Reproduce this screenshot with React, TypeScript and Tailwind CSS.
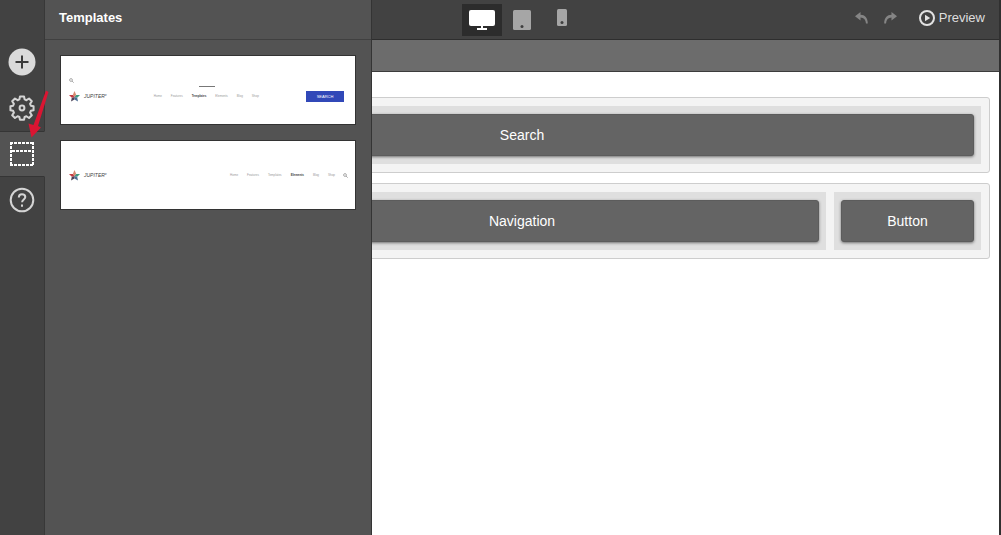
import type { ReactNode } from "react";

function PlusIcon() {
  return (
    <svg width="28" height="28" viewBox="0 0 28 28" fill="none" aria-hidden="true">
      <circle cx="14" cy="14" r="13.5" fill="#dadada" />
      <path d="M14 7.500v13M7.500 14h13" stroke="#3a3a3a" strokeWidth="2" />
    </svg>
  );
}

function GearIcon() {
  return (
    <svg width="26" height="26" viewBox="0 0 26 27" fill="none" stroke="#d4d4d4" strokeWidth="2.100" strokeLinejoin="round" aria-hidden="true">
      <path d="M10.900 1.500h4.200l.6 3.100 1.900.8 2.700-1.800 2.900 2.900-1.800 2.700.8 1.900 2.800.6v4.100l-2.800.6-.8 1.900 1.800 2.700-2.900 2.900-2.700-1.800-1.900.8-.6 2.800h-4.200l-.6-2.800-1.900-.8-2.700 1.800-2.900-2.900 1.800-2.700-.8-1.900-2.800-.6v-4.100l2.800-.6.8-1.900-1.800-2.700 2.900-2.900 2.700 1.800 1.900-.8z" />
      <circle cx="13" cy="13.500" r="2.500" />
    </svg>
  );
}

function LayoutIcon() {
  return (
    <svg width="26" height="26" viewBox="0 0 26 26" fill="none" stroke="#fff" strokeWidth="2" aria-hidden="true">
      <path d="M1 2h24M1 24h24M2 1v24M24 1v24" strokeDasharray="3 1" />
      <path d="M3 10h20" strokeDasharray="3 1" />
    </svg>
  );
}

function HelpIcon() {
  return (
    <svg width="26" height="26" viewBox="0 0 26 26" fill="none" stroke="#d4d4d4" strokeWidth="2" aria-hidden="true">
      <circle cx="13" cy="13" r="11.300" />
      <path d="M9.800 10.500c0-2 1.300-3.300 3.200-3.300s3.300 1.200 3.300 2.900c0 2.300-3.200 2.600-3.200 5.200" />
      <path d="M13 17.500v2.200" />
    </svg>
  );
}

function DesktopIcon() {
  return (
    <svg width="26" height="22" viewBox="0 0 26 22" fill="#fff" aria-hidden="true">
      <rect x="0" y="1" width="26" height="16" rx="2" />
      <path d="M12 17h2v2h4v2H8v-2h4z" />
    </svg>
  );
}

function TabletIcon() {
  return (
    <svg width="18" height="20" viewBox="0 0 18 20" aria-hidden="true">
      <rect width="18" height="20" rx="1.500" fill="#a6a6a6" />
      <circle cx="9" cy="16.500" r="1.500" fill="#3f3f3f" />
    </svg>
  );
}

function PhoneIcon() {
  return (
    <svg width="10" height="18" viewBox="0 0 10 18" aria-hidden="true">
      <rect width="10" height="17" rx="1.500" fill="#a6a6a6" />
      <circle cx="5" cy="13.500" r="1.500" fill="#3f3f3f" />
    </svg>
  );
}

function UndoIcon({ flip = false }: { flip?: boolean }) {
  return (
    <svg width="14" height="12" viewBox="0 0 14 12" className={flip ? "-scale-x-100" : ""} aria-hidden="true">
      <path d="M0 4.200 5.500 0v2.800c4.300 0 7.300 3 7.300 8.700h-1.800c-.3-4-2.200-6-5.500-6v2.900z" fill="#858585" />
    </svg>
  );
}

function PlayIcon() {
  return (
    <svg width="16" height="16" viewBox="0 0 16 16" fill="none" aria-hidden="true">
      <circle cx="8" cy="8" r="7" stroke="#e2e2e2" strokeWidth="2" />
      <path d="M6 4.800v6.400L11.200 8z" fill="#e2e2e2" />
    </svg>
  );
}

function TinySearch() {
  return (
    <svg width="5" height="5" viewBox="0 0 5 5" fill="none" stroke="#888" strokeWidth=".7" aria-hidden="true">
      <circle cx="2" cy="2" r="1.400" />
      <path d="M3 3l1.700 1.700" />
    </svg>
  );
}

function Brand() {
  return (
    <span className="flex items-center gap-1">
      <svg width="11" height="11" viewBox="0 0 11 11" aria-hidden="true">
        <path d="M5.500 0 7.200 4 5.500 6 3.800 4z" fill="#d98a72" />
        <path d="M11 4.100 8.200 6.700 5.500 6 7.200 4z" fill="#3f9a80" />
        <path d="M9 10.600 5.500 8.600V6l2.700.7z" fill="#4a6c93" />
        <path d="M2 10.600 2.800 6.700 5.500 6v2.600z" fill="#4b4258" />
        <path d="M0 4.100 3.800 4l1.700 2-2.700.7z" fill="#c23b42" />
      </svg>
      <span className="text-[5px] leading-none text-[#444] italic">JUPITER<sup>x</sup></span>
    </span>
  );
}

const links = ["Home", "Features", "Templates", "Elements", "Blog", "Shop"];

function MiniNav({ active }: { active: string }) {
  return (
    <span className="flex gap-[9px] text-[3px] leading-none text-[#999]">
      {links.map((link) => (
        <span key={link} className={link === active ? "font-bold text-[#444]" : ""}>
          {link}
        </span>
      ))}
    </span>
  );
}

function RailButton({ label, active = false, children }: { label: string; active?: boolean; children: ReactNode }) {
  return (
    <button
      type="button"
      aria-label={label}
      className={
        active
          ? "flex h-[46px] w-full items-center justify-center border-y border-y-[#353535] border-r border-r-[#535353] bg-[#535353]"
          : "flex h-[46px] w-full items-center justify-center border-r border-[#383838]"
      }
    >
      {children}
    </button>
  );
}

function Cell({ label, className }: { label?: string; className: string }) {
  return (
    <div className={`bg-[#dfdfdf] px-[7px] py-2 ${className}`}>
      <div className="flex h-[42px] items-center justify-center rounded-[3px] border border-[#5c5c5c] bg-[#646464] text-sm text-white shadow-[0_1px_3px_rgba(0,0,0,0.5)]">
        {label}
      </div>
    </div>
  );
}

const thumbnail = "w-full h-[70px] border border-[#333] bg-white";

export default function App() {
  return (
    <div className="relative flex min-h-screen bg-white font-['Liberation_Sans',Arial,sans-serif]">
      <nav aria-label="Editor" className="flex w-[45px] shrink-0 flex-col bg-[#424242]">
        <div className="h-[39px] border-r border-[#383838]" />
        <RailButton label="Add element"><PlusIcon /></RailButton>
        <RailButton label="Settings"><GearIcon /></RailButton>
        <RailButton label="Templates" active><LayoutIcon /></RailButton>
        <RailButton label="Help"><HelpIcon /></RailButton>
        <div className="grow border-r border-[#383838]" />
      </nav>

      <div className="relative flex min-w-0 grow flex-col border-r-2 border-[#303030]">
        <header className="grid h-10 grid-cols-[1fr_auto_1fr] items-center border-b border-[#2e2e2e] bg-[#424242]">
          <div className="col-start-2 flex">
            <button type="button" aria-label="Desktop" className="flex h-8 w-10 items-center justify-center bg-[#2c2c2c]">
              <DesktopIcon />
            </button>
            <button type="button" aria-label="Tablet" className="flex h-8 w-10 items-center justify-center">
              <TabletIcon />
            </button>
            <button type="button" aria-label="Phone" className="flex h-8 w-10 items-center justify-center pb-1">
              <PhoneIcon />
            </button>
          </div>
          <div className="flex items-center justify-end pr-[14px] pb-1">
            <button type="button" aria-label="Undo" className="mr-[14px]"><UndoIcon /></button>
            <button type="button" aria-label="Redo" className="mr-[22px]"><UndoIcon flip /></button>
            <button type="button" className="flex items-center gap-1 text-[13px] text-[#dedede]">
              <PlayIcon />
              Preview
            </button>
          </div>
        </header>
        <div className="h-8 border-b border-[#3c3c3c] bg-[#6c6c6c]" />

        <main className="flex flex-col gap-[10px] px-[9px] pt-[25px]">
          <section className="flex rounded-[3px] border border-[#cdcdcd] bg-[#f4f4f4] p-2">
            <Cell label="Search" className="grow" />
          </section>
          <section className="flex gap-2 rounded-[3px] border border-[#cdcdcd] bg-[#f4f4f4] p-2">
            <Cell className="w-[147px]" />
            <Cell label="Navigation" className="grow" />
            <Cell label="Button" className="w-[147px]" />
          </section>
        </main>

        <aside className="absolute inset-y-0 left-0 w-[327px] border-r border-[#343434] bg-[#535353]">
          <h2 className="flex h-10 items-center border-b border-[#404040] px-[14px] pb-1 text-[13px] font-bold text-white">
            Templates
          </h2>
          <div className="flex flex-col gap-[15px] p-[15px]">
            <button type="button" className={`${thumbnail} flex flex-col pt-[22px] pr-[11px] pl-2`}>
              <TinySearch />
              <span className="mt-[3px] flex w-full justify-center">
                <span className="h-px w-4 bg-[#777]" />
              </span>
              <span className="mt-1 flex w-full items-center justify-between">
                <Brand />
                <MiniNav active="Templates" />
                <span className="flex h-[11px] w-[38px] items-center justify-center bg-[#3148b8] text-[4px] leading-none text-white">
                  SEARCH
                </span>
              </span>
            </button>
            <button type="button" className={`${thumbnail} flex items-center justify-between pr-[7px] pl-2`}>
              <Brand />
              <span className="flex items-center gap-2">
                <MiniNav active="Elements" />
                <TinySearch />
              </span>
            </button>
          </div>
        </aside>
      </div>

      <svg className="pointer-events-none absolute top-[89px] left-[27px]" width="22" height="50" viewBox="0 0 22 50" aria-hidden="true">
        <path d="M19 1.500 21.500 3 11 37 14 38.500 4.500 48.500 1.500 34.500 6.500 36z" fill="#da1532" />
      </svg>
    </div>
  );
}
